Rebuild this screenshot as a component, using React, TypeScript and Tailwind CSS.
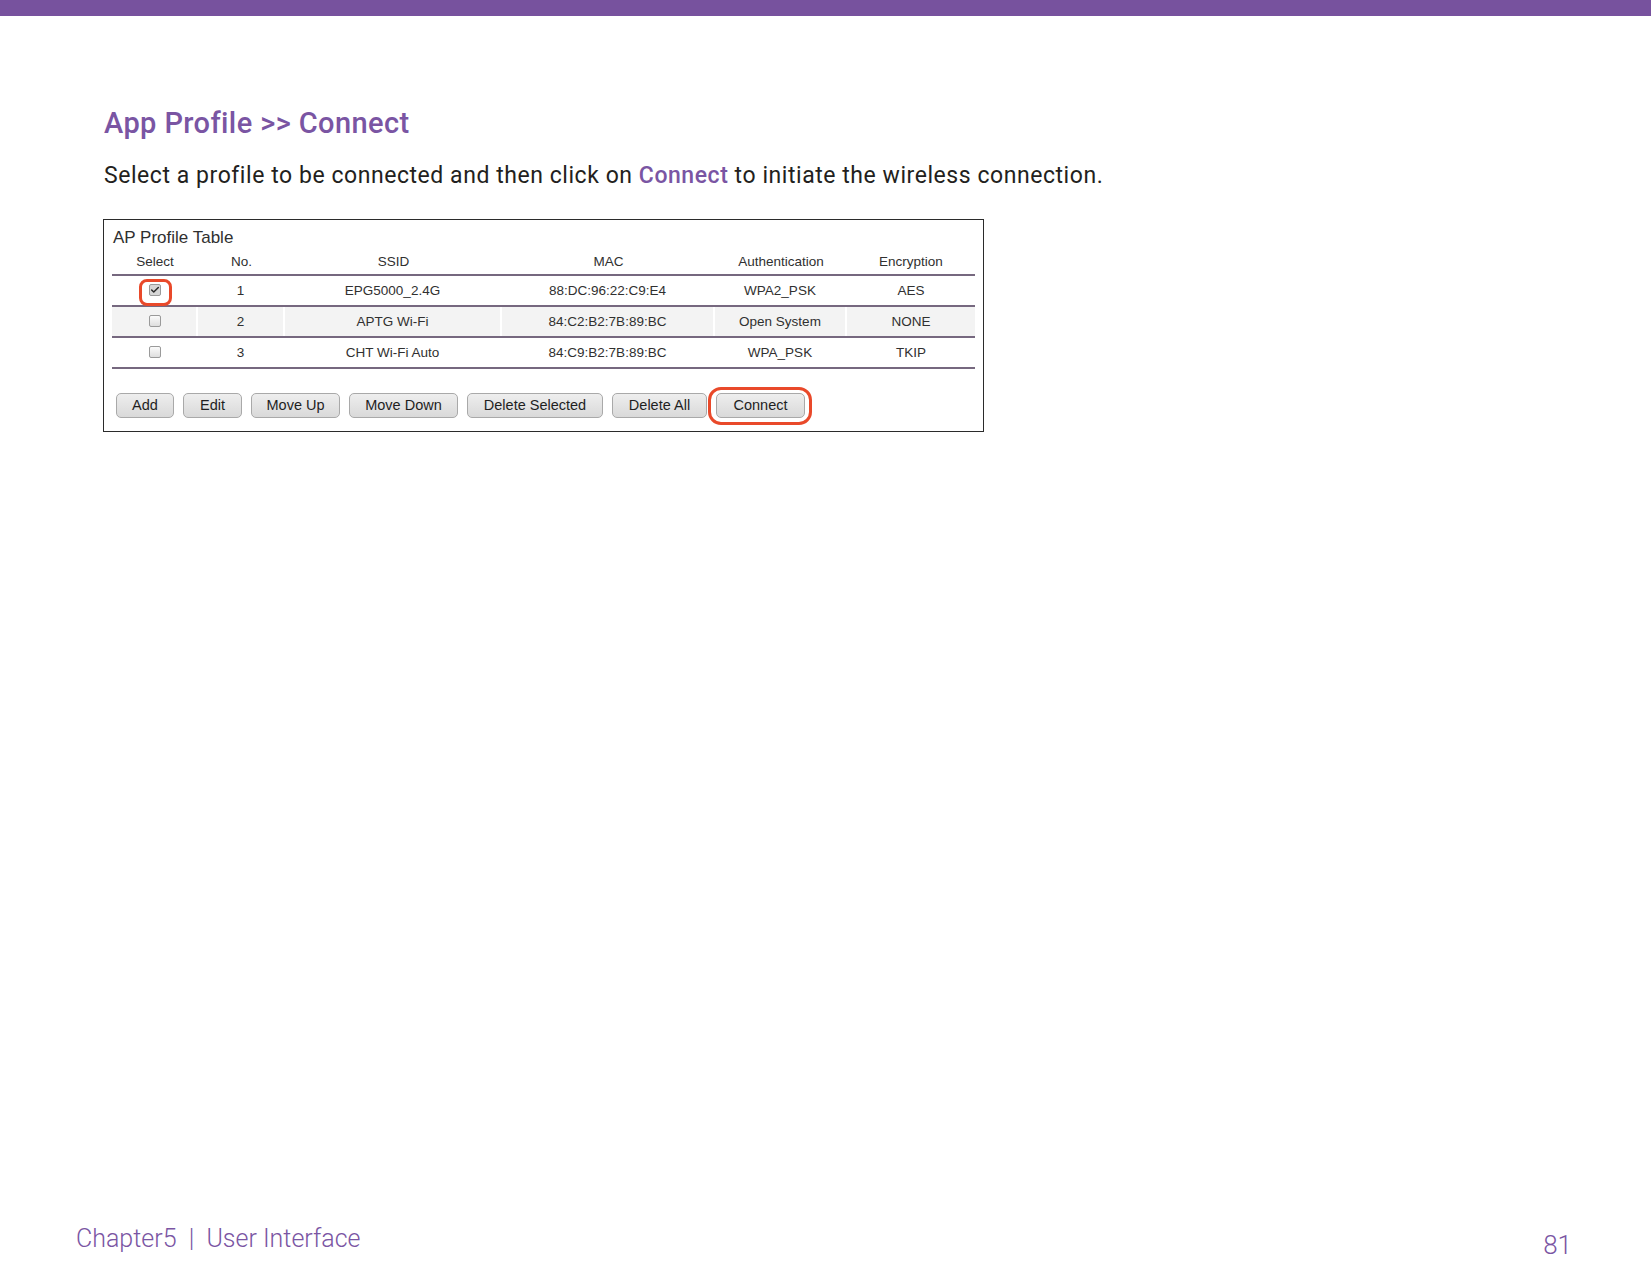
import { Check } from "lucide-react"

interface Profile {
  no: number
  ssid: string
  mac: string
  auth: string
  enc: string
  checked: boolean
}

const profiles: Profile[] = [
  { no: 1, ssid: "EPG5000_2.4G", mac: "88:DC:96:22:C9:E4", auth: "WPA2_PSK", enc: "AES", checked: true },
  { no: 2, ssid: "APTG Wi-Fi", mac: "84:C2:B2:7B:89:BC", auth: "Open System", enc: "NONE", checked: false },
  { no: 3, ssid: "CHT Wi-Fi Auto", mac: "84:C9:B2:7B:89:BC", auth: "WPA_PSK", enc: "TKIP", checked: false },
]

// button widths measured off the screenshot
const buttons = [
  { label: "Add", w: "w-[58px]" },
  { label: "Edit", w: "w-[59px]" },
  { label: "Move Up", w: "w-[89px]" },
  { label: "Move Down", w: "w-[109px]" },
  { label: "Delete Selected", w: "w-[136px]" },
  { label: "Delete All", w: "w-[95px]" },
]

// column widths: select, no, ssid, mac, auth, enc
const cols = "grid grid-cols-[86px_87px_217px_213px_132px_128px]"

function Checkbox({ checked }: { checked: boolean }) {
  return (
    <span
      className={`flex h-[12px] w-[12px] items-center justify-center rounded-[2px] border border-[#9a9a9a] ${
        checked ? "bg-[#d6d6d6]" : "bg-linear-to-b from-[#fbfbfb] to-[#dedede]"
      }`}
    >
      {checked && <Check size={10} strokeWidth={3.5} className="text-[#2a2a2a]" />}
    </span>
  )
}

function GrayButton({ label, w }: { label: string; w: string }) {
  return (
    <button
      className={`${w} h-[25px] rounded-[5px] border border-[#a9a9a9] bg-linear-to-b from-[#eeeeee] to-[#d9d9d9] text-center text-[14.5px] leading-[23px] text-[#1f1f1f]`}
    >
      {label}
    </button>
  )
}

function ProfileTable() {
  return (
    <div className="ml-[103px] mt-[32px] w-[881px] border border-[#2b2b2b] bg-white pl-[8px] pr-[8px] pb-[13px] pt-[9px] font-['Liberation_Sans',Arial,sans-serif] text-[#303030]">
      <div className="pl-[1px] text-[17px] leading-[18px]">AP Profile Table</div>

      <div className={`${cols} h-[27px] items-end pb-[4px] text-[13.5px] leading-[16px]`}>
        <div className="text-center">Select</div>
        <div className="text-center">No.</div>
        <div className="text-center">SSID</div>
        <div className="text-center">MAC</div>
        <div className="text-center">Authentication</div>
        <div className="text-center">Encryption</div>
      </div>
      <div className="h-[2px] bg-[#76687f]" />

      {profiles.map((p) => {
        const cell = `flex items-center justify-center ${p.no === 2 ? "bg-[#f3f3f3]" : ""}`
        return (
          <div key={p.no}>
            <div className={`${cols} h-[29px] text-[13.5px] leading-[16px]`}>
              <div className={`${cell} border-r-2 border-white`}>
                <span className="relative mt-[-2px] ml-[2px]">
                  <Checkbox checked={p.checked} />
                  {p.checked && (
                    <span className="absolute left-[-10px] right-[-11px] top-[-5px] bottom-[-10px] rounded-[8px] border-[3px] border-[#e9492a]" />
                  )}
                </span>
              </div>
              <div className={`${cell} border-r-2 border-white`}>{p.no}</div>
              <div className={`${cell} border-r-2 border-white`}>{p.ssid}</div>
              <div className={`${cell} border-r-2 border-white`}>{p.mac}</div>
              <div className={`${cell} border-r-2 border-white`}>{p.auth}</div>
              <div className={cell}>{p.enc}</div>
            </div>
            <div className="h-[2px] bg-[#76687f]" />
          </div>
        )
      })}

      <div className="ml-[4px] mt-[24px] flex gap-[9px]">
        {buttons.map((b) => (
          <GrayButton key={b.label} label={b.label} w={b.w} />
        ))}
        <span className="relative">
          <GrayButton label="Connect" w="w-[89px]" />
          <span className="absolute left-[-8px] right-[-7px] top-[-6px] bottom-[-7px] rounded-[13px] border-[3px] border-[#e9492a]" />
        </span>
      </div>
    </div>
  )
}

export default function App() {
  return (
    <div className="flex min-h-[1275px] w-[1651px] flex-col bg-white font-['Roboto',sans-serif]">
      <div className="h-[16px] bg-[#77529e]" />

      <h1 className="ml-[104px] mt-[93px] text-[29px] font-medium leading-[28px] tracking-[0.4px] text-[#7a55a3]">
        App Profile &gt;&gt; Connect
      </h1>
      <p className="ml-[104px] mt-[27px] text-[23px] leading-[23px] tracking-[0.55px] text-[#231f20]">
        Select a profile to be connected and then click on{" "}
        <span className="font-medium text-[#7a55a3]">Connect</span> to initiate the wireless connection.
      </p>

      <ProfileTable />

      <div className="mt-auto flex items-start justify-between pb-[15px] pl-[76px] pr-[79px] text-[#7a55a3]">
        <div className="text-[25px] font-light leading-[30px]">
          Chapter5&nbsp;&nbsp;|&nbsp;&nbsp;User Interface
        </div>
        <div className="mt-[6px] text-[26px] font-light leading-[30px]">81</div>
      </div>
    </div>
  )
}
